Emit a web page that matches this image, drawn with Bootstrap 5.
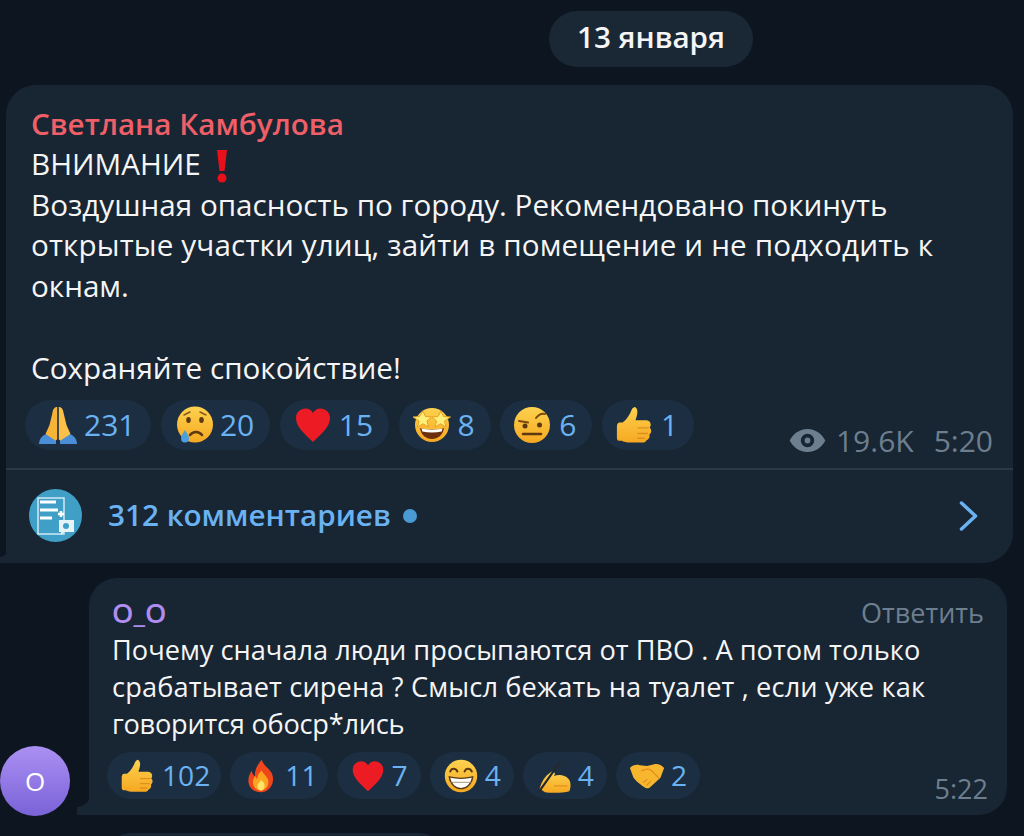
<!DOCTYPE html>
<html lang="ru">
<head>
<meta charset="UTF-8">
<meta name="viewport" content="width=device-width, initial-scale=1.0">
<title>Чат</title>
<link href="https://cdn.jsdelivr.net/npm/bootstrap@5.3.0/dist/css/bootstrap.min.css" rel="stylesheet">
<style>
    html, body { height: 836px; overflow: hidden; }
    body { background: #0d1520; font-family: "Open Sans", "Noto Sans", sans-serif; color: #f5f5f5; }
    .date-row { padding: 11px 271px 0 0; height: 85px; }
    .date-pill { width: 204px; height: 56px; padding-bottom: 3px; background: #1a2735; font-size: 29.6px; font-weight: 600; }
    .tg-bubble { background: #182533; position: relative; }
    .tg-bubble::before { content: ""; position: absolute; bottom: 0; width: 14px; height: 22px; left: -12px;
        background: radial-gradient(circle at 0 0, transparent 13.5px, #182533 14px); }
    .post { margin: 0 11px 0 6px; height: 478px; border-radius: 30px 30px 30px 0; }
    .post::before { left: -6px; width: 8px; height: 14px; background: radial-gradient(circle at 0 0, transparent 7.5px, #182533 8px); }
    .post-body { padding: 18px 20px 0 19px; height: 383px; }
    .post-text { font-size: 29.65px; line-height: 40.8px; padding-left: 6px; }
    .sender { font-weight: 600; color: #ee5f67; padding-top: 1px; margin-bottom: -1px; }
    .react-row { margin-top: 11.4px; }
    .react-group { gap: 9.5px; }
    .react { height: 50px; padding: 0 16px 0 13px; background: #1c2f42; color: #6ab2f2; font-size: 30px; gap: 6px; }
    .react svg { width: 40px; height: 40px; flex: none; }
    .meta { color: #6d7f8f; font-size: 30px; line-height: 30px; margin-bottom: -6px; gap: 20px; }
    .meta svg { width: 37px; height: 25px; margin-right: 10px; }
    .divider { height: 2px; background: #2a3846; margin-top: 0; }
    .post-foot { height: 93px; padding: 0 35px 2px 23px; color: #6ab2f2; font-size: 29.7px; font-weight: 600; }
    .foot-logo { width: 53px; height: 53px; margin-right: 26px; }
    .new-dot { width: 14px; height: 14px; background: #4a9ad4; margin-left: 12px; }
    .reply-row { margin-top: 15px; height: 238px; }
    .ava { width: 70px; height: 70px; background: linear-gradient(#ab90f2, #7a62d8); color: #fff; font-size: 26px; font-weight: 500; }
    .reply { margin: 0 17px 1px 19px; height: 237px; border-radius: 28px 28px 28px 0; padding: 16px 19px 0 23px; }
    .reply-head { line-height: 37px; font-size: 27.2px; }
    .reply-name { color: #b08df0; font-weight: 600; }
    .reply-act { color: #6d7f8f; font-size: 27px; padding-right: 4px; }
    .reply-text { font-size: 27.2px; line-height: 37px; }
    .reply .react-row { margin: 10px 0 0 -5px; gap: 9px; }
    .reply .react { height: 47px; padding: 0 13px; font-size: 28.2px; gap: 6px; }
    .reply .react svg { width: 36px; height: 36px; }
    .reply .react.tight-a { padding-right: 11px; }
    .reply .react.tight-b { padding-right: 10px; }
    .reply .meta { font-size: 27px; margin: 0 0 -5px; }
    .next-bubble { width: 330px; height: 20px; margin: 17px 0 0 110px; background: #182533; border-radius: 24px 24px 0 0; }
    .alert-mark { width: 18px; height: 34px; margin: -10px 0 -6px 5px; vertical-align: -2px; }
    .wide-line { letter-spacing: .14px; }
    .narrow-line { letter-spacing: -.25px; }
</style>
</head>
<body>
<svg width="0" height="0" class="d-block">
    <defs>
        <linearGradient id="yel" x1="0" y1="0" x2="0" y2="1"><stop offset="0" stop-color="#fdd24f"/><stop offset="1" stop-color="#f6a821"/></linearGradient>
        <symbol id="e-pray" viewBox="0 0 40 40">
            <path d="M1 39c0-4 2-7 5-9l5-2 7 5v6z" fill="#4a8ed8"/><path d="M39 39c0-4-2-7-5-9l-5-2-7 5v6z" fill="#4a8ed8"/>
            <path d="M19.200 2c-3 0-4.200 2-5 7l-2.700 11-4 9 10 6.500 1.700-1V2z" fill="#f7b335"/>
            <path d="M20.800 2c3 0 4.200 2 5 7l2.700 11 4 9-10 6.500-1.700-1V2z" fill="#fbc048"/>
        </symbol>
        <symbol id="e-cry" viewBox="0 0 40 40">
            <circle cx="21" cy="19.500" r="18" fill="url(#yel)"/>
            <ellipse cx="14.500" cy="15" rx="2.300" ry="3" fill="#5b3a12"/><ellipse cx="27.500" cy="15" rx="2.300" ry="3" fill="#5b3a12"/>
            <path d="M10 10l6-3M32 10l-6-3" stroke="#8a5a1c" stroke-width="1.500" fill="none" stroke-linecap="round"/>
            <path d="M16 30c3-4 9-4 12 0" stroke="#5b3a12" stroke-width="2.500" fill="none" stroke-linecap="round"/>
            <path d="M11 25c2.200 3.500 4 6 4 8.500a4 4 0 0 1-8 0c0-2.500 1.800-5 4-8.500z" fill="#4a9fe0"/>
        </symbol>
        <symbol id="e-heart" viewBox="0 0 40 40">
            <path d="M20 37C12 29 3 22 3 13 3 7 8 3.500 12.500 3.500c3.500 0 6 2 7.500 4.500 1.500-2.500 4-4.500 7.500-4.500C32 3.500 37 7 37 13c0 9-9 16-17 24z" fill="#ed1c24"/>
        </symbol>
        <symbol id="e-star" viewBox="0 0 40 40">
            <circle cx="20" cy="20" r="17" fill="url(#yel)"/>
            <path d="M8 23c7 2 17 2 24 0-1 7-6 11-12 11S9 30 8 23z" fill="#6d2e10"/>
            <path d="M9.500 23.500c6 1.500 15 1.500 21 0l-.8 3c-6 1.300-13.400 1.300-19.400 0z" fill="#fff"/>
            <path d="M11 6l2.500 5.500 6 .5-4.500 4 1.500 6-5.500-3.200L5.500 22 7 16 1 12l6.500-.5z" fill="#fdf07a" stroke="#e8a020" stroke-width="1"/>
            <path d="M29 6l2.500 5.500 7 .5-6 4 1.500 6-5.500-3.200-5.500 3.200 1.500-6-4.500-4 6-.5z" fill="#fdf07a" stroke="#e8a020" stroke-width="1"/>
        </symbol>
        <symbol id="e-brow" viewBox="0 0 40 40">
            <circle cx="19" cy="20" r="18" fill="url(#yel)"/>
            <path d="M6 16l9 1.500M23 13c3-4 6-5 9-4" stroke="#7a4a12" stroke-width="2" fill="none" stroke-linecap="round"/>
            <circle cx="12" cy="21" r="2.500" fill="#5b3a12"/><circle cx="26.500" cy="20" r="2.500" fill="#5b3a12"/>
            <path d="M10 29h18" stroke="#5b3a12" stroke-width="2.500" stroke-linecap="round"/>
        </symbol>
        <symbol id="e-thumb" viewBox="0 0 42 42">
            <path d="M20 2c2 0 3.500 2 3.500 5 0 3-1 6-2 9h11c3 0 5 2 5 4.500 0 1.500-.5 2.500-1 3.500 1 1 1.500 2 1.500 3.500s-1 3-2 3.500c.5 1 .5 2 0 3-.5 1.500-2 2.500-3 3-.5 1.500-2 2.500-4 2.500H17c-5 0-8-1-10-2H4c-1 0-2-1-2-3v-12c0-2 1-4 3-4h3c3-2 6-6 8-10 1-2 2-6 4-6z" fill="url(#yel)"/>
            <path d="M24 24h11M24 30h10M24 35h7" stroke="#e08f1e" stroke-width="1.500" fill="none" stroke-linecap="round"/>
        </symbol>
        <symbol id="e-fire" viewBox="0 0 40 40">
            <path d="M21 2c1 6 8 9 11 15 3 7 1 14-4 18-2 2-5 3-8 3-8 0-14-5-14-13 0-5 2-8 4-11 0 3 1 5 3 6 0-7 3-13 8-18z" fill="#f0461c"/>
            <path d="M21 14c1 4 6 6 7 11 1 6-3 11-8 11s-9-4-9-9c0-3 1-5 3-7 0 2 1 3 2 3 0-4 2-7 5-9z" fill="#fba41d"/>
            <path d="M20 24c1 2 4 3 4 7 0 3-2 5-4 5s-4-2-4-5c0-3 3-4 4-7z" fill="#ffe36a"/>
        </symbol>
        <symbol id="e-grin" viewBox="0 0 40 40">
            <circle cx="20" cy="20" r="18" fill="url(#yel)"/>
            <path d="M8 15c1.500-4 6-4 8 0M24 15c1.500-4 6-4 8 0" stroke="#5b3a12" stroke-width="2.200" fill="none" stroke-linecap="round"/>
            <path d="M7 21c8 2 18 2 26 0-1 8-7 13-13 13S8 29 7 21z" fill="#fff" stroke="#5b3a12" stroke-width="1.500"/>
            <path d="M8 27h24" stroke="#9b8a70" stroke-width="1" fill="none"/>
        </symbol>
        <symbol id="e-write" viewBox="0 0 40 40">
            <path d="M4 34C6 26 10 20 16 16c2-2 5-1 5 2l-1 2c6-2 12-1 16 3 3 3 3 10 1 14-7 2-21 2-27 1z" fill="url(#yel)"/>
            <path d="M3 38L27 4" stroke="#25282c" stroke-width="2.400" stroke-linecap="round" fill="none"/>
            <path d="M20 31h15" stroke="#e08f1e" stroke-width="1.300" fill="none"/>
        </symbol>
        <symbol id="e-shake" viewBox="0 0 40 40">
            <path d="M1 11c3-3 7-4 11-3l8 1 8-2c4-1 8 1 11 4l-4 11-11 10c-2 2-4 2-6 1l-3-2c-3-2-7-5-10-9z" fill="#f8b62f"/>
            <path d="M14 14l7-2 4 2 8 8M16 27l4-3M20 30l4-4" stroke="#e08a18" stroke-width="1.300" fill="none" stroke-linecap="round"/>
        </symbol>
    </defs>
</svg>

<div class="date-row d-flex justify-content-end align-items-start">
    <div class="date-pill rounded-pill d-flex align-items-center justify-content-center">13 января</div>
</div>

<!-- пост -->
<div class="tg-bubble post">
    <div class="post-body">
        <div class="post-text">
            <div class="sender">Светлана Камбулова</div>
            ВНИМАНИЕ <svg class="alert-mark" viewBox="0 0 18 34"><path d="M4 1h10l-2.500 21h-5z" fill="#e8101a"/><circle cx="9" cy="29" r="4.500" fill="#e8101a"/></svg><br>
            Воздушная опасность по городу. Рекомендовано покинуть<br>
            <span class="wide-line">открытые участки улиц, зайти в помещение и не подходить к</span><br>
            окнам.<br>
            <br>
            Сохраняйте спокойствие!
        </div>
        <div class="react-row d-flex align-items-end">
            <div class="react-group d-flex">
                <div class="react rounded-pill d-flex align-items-center"><svg><use href="#e-pray"/></svg>231</div>
                <div class="react rounded-pill d-flex align-items-center"><svg><use href="#e-cry"/></svg>20</div>
                <div class="react rounded-pill d-flex align-items-center"><svg><use href="#e-heart"/></svg>15</div>
                <div class="react rounded-pill d-flex align-items-center"><svg><use href="#e-star"/></svg>8</div>
                <div class="react rounded-pill d-flex align-items-center"><svg><use href="#e-brow"/></svg>6</div>
                <div class="react rounded-pill d-flex align-items-center"><svg><use href="#e-thumb"/></svg>1</div>
            </div>
            <div class="meta d-flex align-items-center ms-auto">
                <span class="d-flex align-items-center"><svg viewBox="0 0 38 26"><path fill-rule="evenodd" fill="#6d7f8f" d="M19 1C10 1 3.500 7 .5 13c3 6 9.500 12 18.500 12s15.500-6 18.500-12C34.500 7 28 1 19 1zm0 5a7 7 0 1 1 0 14 7 7 0 0 1 0-14zm0 4a3 3 0 1 0 0 6 3 3 0 0 0 0-6z"/></svg>19.6K</span>
                <span>5:20</span>
            </div>
        </div>
    </div>
    <div class="divider"></div>
    <div class="post-foot d-flex align-items-center">
        <svg class="foot-logo" viewBox="0 0 53 53">
            <circle cx="26.500" cy="26.500" r="26.500" fill="#3f9fc6"/>
            <path d="M9 9h26v36H9z" fill="none" stroke="#cfeaf3" stroke-width="1.500"/>
            <path d="M11 13h16M11 21h18M11 29h12" stroke="#fff" stroke-width="3"/>
            <path d="M29 25h6M32 22v6" stroke="#fff" stroke-width="2.500"/>
            <path d="M30 31h15v12H35l-3 3v-3h-2z" fill="#e6f4f8"/>
            <circle cx="37" cy="37" r="3" fill="#3f9fc6"/>
        </svg>
        <span>312 комментариев</span>
        <span class="new-dot rounded-circle d-block"></span>
        <svg class="ms-auto" width="19" height="30" viewBox="0 0 19 30"><path d="M2.500 2l14 13-14 13" fill="none" stroke="#6ab2f2" stroke-width="3.500" stroke-linecap="round" stroke-linejoin="round"/></svg>
    </div>
</div>

<!-- комментарий -->
<div class="reply-row d-flex align-items-end">
    <div class="ava rounded-circle d-flex align-items-center justify-content-center flex-shrink-0">О</div>
    <div class="tg-bubble reply flex-grow-1">
        <div class="reply-head d-flex justify-content-between">
            <span class="reply-name">О_О</span>
            <span class="reply-act">Ответить</span>
        </div>
        <div class="reply-text">
            Почему сначала люди просыпаются от ПВО . А потом только<br>
            <span class="wide-line">срабатывает сирена ? Смысл бежать на туалет , если уже как</span><br>
            <span class="narrow-line">говорится обоср*лись</span>
        </div>
        <div class="react-row d-flex align-items-end">
            <div class="react tight-a rounded-pill d-flex align-items-center"><svg><use href="#e-thumb"/></svg>102</div>
            <div class="react tight-b rounded-pill d-flex align-items-center"><svg><use href="#e-fire"/></svg>11</div>
            <div class="react rounded-pill d-flex align-items-center"><svg><use href="#e-heart"/></svg>7</div>
            <div class="react rounded-pill d-flex align-items-center"><svg><use href="#e-grin"/></svg>4</div>
            <div class="react rounded-pill d-flex align-items-center"><svg><use href="#e-write"/></svg>4</div>
            <div class="react rounded-pill d-flex align-items-center"><svg><use href="#e-shake"/></svg>2</div>
            <div class="meta ms-auto">5:22</div>
        </div>
    </div>
</div>
<div class="next-bubble"></div>

<script src="https://cdn.jsdelivr.net/npm/bootstrap@5.3.0/dist/js/bootstrap.bundle.min.js"></script>
</body>
</html>
